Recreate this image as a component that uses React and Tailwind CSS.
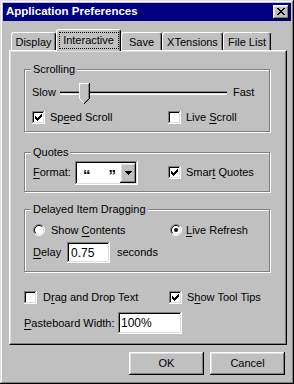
import React from 'react';

const raised = 'shadow-[inset_-1px_-1px_#000,inset_1px_1px_#fff,inset_-2px_-2px_#808080,inset_2px_2px_#dfdfdf]';
const sunken = 'shadow-[inset_-1px_-1px_#fff,inset_1px_1px_#808080,inset_-2px_-2px_#dfdfdf,inset_2px_2px_#000]';

const COLORS = { X: '#000', k: '#000', w: '#fff', g: '#808080', s: '#c0c0c0', l: '#dfdfdf' };

// tiny pixel-art helper for the win95 glyphs
function Pixels({ rows, className }) {
    const w = rows[0].length;
    const h = rows.length;
    return (
        <svg width={w} height={h} viewBox={`0 0 ${w} ${h}`} className={className} shapeRendering="crispEdges">
            {rows.flatMap((r, y) =>
                [...r].map((c, x) =>
                    COLORS[c] ? <rect key={`${x}-${y}`} x={x} y={y} width="1" height="1" fill={COLORS[c]} /> : null
                )
            )}
        </svg>
    );
}

const CLOSE_X = [
    'XX....XX',
    '.XX..XX.',
    '..XXXX..',
    '...XX...',
    '..XXXX..',
    '.XX..XX.',
    'XX....XX',
];

const CHECK = [
    '......X',
    '.....XX',
    'X...XXX',
    'XX.XXX.',
    'XXXXX..',
    '.XXX...',
    '..X....',
];

const ARROW = [
    'XXXXXXX',
    '.XXXXX.',
    '..XXX..',
    '...X...',
];

const THUMB = [
    'wwwwwwwwwwk',
    'wlsssssssgk',
    'wssssssssgk',
    'wssssssssgk',
    'wssssssssgk',
    'wssssssssgk',
    'wssssssssgk',
    'wssssssssgk',
    'wssssssssgk',
    'wssssssssgk',
    'wssssssssgk',
    'wssssssssgk',
    'wssssssssgk',
    'wssssssssgk',
    'wssssssssgk',
    'wssssssssgk',
    '.wssssssgk.',
    '..wssssgk..',
    '...wssgk...',
    '....wgk....',
    '.....k.....',
];

function Check({ checked }) {
    return (
        <span className={`w-[13px] h-[13px] shrink-0 bg-white flex items-center justify-center ${sunken}`}>
            {checked && <Pixels rows={CHECK} />}
        </span>
    );
}

function Radio({ checked }) {
    return (
        <svg width="12" height="12" viewBox="0 0 12 12" className="shrink-0">
            <circle cx="6" cy="6" r="5" fill="#fff" />
            <path d="M2.1 9.9 A5.5 5.5 0 0 1 9.9 2.1" fill="none" stroke="#808080" strokeWidth="1" />
            <path d="M9.9 2.1 A5.5 5.5 0 0 1 2.1 9.9" fill="none" stroke="#fff" strokeWidth="1" />
            <path d="M2.8 9.2 A4.5 4.5 0 0 1 9.2 2.8" fill="none" stroke="#000" strokeWidth="1" />
            <path d="M9.2 2.8 A4.5 4.5 0 0 1 2.8 9.2" fill="none" stroke="#dfdfdf" strokeWidth="1" />
            {checked && <circle cx="6" cy="6" r="2" fill="#000" />}
        </svg>
    );
}

function Group({ label, className, children }) {
    return (
        <div className={`relative border border-[#808080] shadow-[1px_1px_0_#fff,inset_1px_1px_0_#fff] ${className}`}>
            <span className="absolute -top-[7px] left-[6px] bg-[#c0c0c0] px-[2px] leading-[13px]">{label}</span>
            {children}
        </div>
    );
}

function Tab({ label, width, active }) {
    if (active) {
        return (
            <div
                className={`h-[22px] -mb-[1px] ${width} bg-[#c0c0c0] border-t border-l border-white border-r border-r-black rounded-t-[3px] shadow-[inset_-1px_0_#808080] flex items-start justify-center pt-[2px]`}
            >
                <span className="border border-dotted border-black h-[17px] w-[60px] flex items-center justify-center leading-none pb-[1px]">
                    {label}
                </span>
            </div>
        );
    }
    return (
        <div
            className={`h-[18px] ${width} bg-[#c0c0c0] border-t border-l border-white border-r border-r-black rounded-t-[3px] shadow-[inset_-1px_0_#808080] flex items-center justify-center leading-none pt-[1px]`}
        >
            {label}
        </div>
    );
}

const U = ({ children }) => <span className="underline underline-offset-[2px]">{children}</span>;

export default function App() {
    return (
        <div
            className={`w-[294px] h-[384px] bg-[#c0c0c0] p-[3px] flex flex-col text-[11px] text-black shadow-[inset_-1px_-1px_#000,inset_1px_1px_#dfdfdf,inset_-2px_-2px_#808080,inset_2px_2px_#fff]`}
            style={{ fontFamily: '"Liberation Sans", Arial, sans-serif' }}
        >
            {/* Title bar */}
            <div className="h-[18px] bg-[#000080] flex items-center justify-between pl-[3px] pr-[2px]">
                <span className="text-white font-bold text-[11.5px] leading-none">Application Preferences</span>
                <button className={`w-[16px] h-[14px] bg-[#c0c0c0] flex items-center justify-center pb-[1px] ${raised}`}>
                    <Pixels rows={CLOSE_X} />
                </button>
            </div>

            {/* Tabs + panel */}
            <div className="mt-[8px] ml-[6px] w-[278px]">
                <div className="relative z-10 flex items-end h-[21px] pl-[2px]">
                    <Tab label="Display" width="w-[45px]" />
                    <Tab label="Interactive" width="w-[65px]" active />
                    <Tab label="Save" width="w-[41px]" />
                    <Tab label="XTensions" width="w-[61px]" />
                    <Tab label="File List" width="w-[48px]" />
                </div>

                <div className="h-[295px] border border-white border-r-black border-b-black shadow-[inset_-1px_-1px_#808080,inset_1px_1px_#dfdfdf] pl-[14px] pt-[18px]">
                    {/* Scrolling */}
                    <Group label="Scrolling" className="w-[246px] h-[63px] pt-[12px] pl-[7px]">
                        <div className="flex items-center h-[21px]">
                            <span className="w-[28px]">Slow</span>
                            <div className="relative w-[167px] h-[4px] border-t border-t-[#808080] border-b border-b-white bg-[#dfdfdf] shadow-[inset_0_1px_#000]">
                                <Pixels rows={THUMB} className="absolute left-[19px] -top-[9px]" />
                            </div>
                            <span className="ml-[6px]">Fast</span>
                        </div>
                        <div className="grid grid-cols-[136px_1fr] mt-[6px] h-[13px] items-center">
                            <label className="flex items-center gap-[5px]">
                                <Check checked />
                                <span>Sp<U>e</U>ed Scroll</span>
                            </label>
                            <label className="flex items-center gap-[5px]">
                                <Check />
                                <span>Live <U>S</U>croll</span>
                            </label>
                        </div>
                    </Group>

                    {/* Quotes */}
                    <Group label="Quotes" className="w-[246px] h-[40px] mt-[20px] pl-[7px] flex items-center">
                        <div className="grid grid-cols-[136px_1fr] items-center w-full pt-[1px]">
                            <div className="flex items-center">
                                <span className="w-[43px] pl-[1px]"><U>F</U>ormat:</span>
                                <div className={`w-[63px] h-[24px] bg-white flex items-center p-[2px] ${sunken}`}>
                                    <span className="flex-1 flex items-center pl-[6px] gap-[18px] text-[15px] font-bold leading-none pt-[4px]">
                                        <span>“</span>
                                        <span>”</span>
                                    </span>
                                    <span className={`w-[16px] h-full bg-[#c0c0c0] flex items-center justify-center ${raised}`}>
                                        <Pixels rows={ARROW} />
                                    </span>
                                </div>
                            </div>
                            <label className="flex items-center gap-[5px]">
                                <Check checked />
                                <span>Smar<U>t</U> Quotes</span>
                            </label>
                        </div>
                    </Group>

                    {/* Delayed Item Dragging */}
                    <Group label="Delayed Item Dragging" className="w-[246px] h-[63px] mt-[17px] pl-[7px] pt-[12px]">
                        <div className="grid grid-cols-[136px_1fr] items-center h-[12px]">
                            <label className="flex items-center gap-[6px] pl-[1px]">
                                <Radio />
                                <span>Show <U>C</U>ontents</span>
                            </label>
                            <label className="flex items-center gap-[4px] pl-[2px]">
                                <Radio checked />
                                <span><U>L</U>ive Refresh</span>
                            </label>
                        </div>
                        <div className="flex items-center mt-[8px] h-[21px] pl-[1px]">
                            <span className="w-[34px]"><U>D</U>elay</span>
                            <div className={`w-[43px] h-[21px] bg-white flex items-center pl-[4px] text-[12px] ${sunken}`}>0.75</div>
                            <span className="ml-[7px]">seconds</span>
                        </div>
                    </Group>

                    {/* Loose options */}
                    <div className="grid grid-cols-[145px_1fr] items-center mt-[17px] h-[13px]">
                        <label className="flex items-center gap-[6px]">
                            <Check />
                            <span>D<U>r</U>ag and Drop Text</span>
                        </label>
                        <label className="flex items-center gap-[5px]">
                            <Check checked />
                            <span>S<U>h</U>ow Tool Tips</span>
                        </label>
                    </div>
                    <div className="flex items-center mt-[10px] h-[22px]">
                        <span className="w-[94px]"><U>P</U>asteboard Width:</span>
                        <div className={`w-[64px] h-[22px] bg-white flex items-center pl-[3px] text-[12px] ${sunken}`}>100%</div>
                    </div>
                </div>
            </div>

            {/* Buttons */}
            <div className="flex justify-end gap-[6px] mt-[7px] pr-[6px]">
                <button className={`w-[75px] h-[23px] bg-[#c0c0c0] ${raised}`}>OK</button>
                <button className={`w-[75px] h-[23px] bg-[#c0c0c0] ${raised}`}>Cancel</button>
            </div>
        </div>
    );
}
